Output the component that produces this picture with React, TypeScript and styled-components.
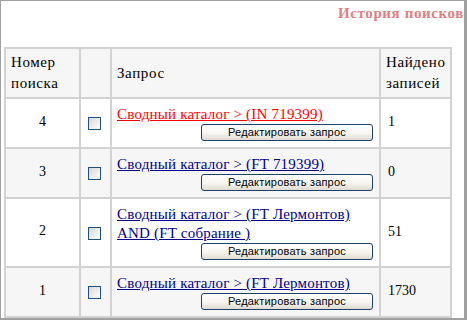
import styled, { createGlobalStyle } from "styled-components";

const GlobalStyle = createGlobalStyle`
  html, body {
    margin: 0;
    padding: 0;
    background: #ffffff;
  }
`;

type Row = {
  num: number;
  query: string[];
  found: number;
  active?: boolean;
  shaded?: boolean;
};

const rows: Row[] = [
  { num: 4, query: ["Сводный каталог > (IN 719399)"], found: 1, active: true },
  { num: 3, query: ["Сводный каталог > (FT 719399)"], found: 0, shaded: true },
  {
    num: 2,
    query: ["Сводный каталог > (FT Лермонтов)", "AND (FT собрание )"],
    found: 51,
  },
  { num: 1, query: ["Сводный каталог > (FT Лермонтов)"], found: 1730, shaded: true },
];

export default function App() {
  return (
    <>
      <GlobalStyle />
      <Frame>
        <Title>История поисков</Title>
        <HistoryTable>
          <colgroup>
            <col style={{ width: 75 }} />
            <col style={{ width: 31 }} />
            <col style={{ width: 269 }} />
            <col style={{ width: 71 }} />
          </colgroup>
          <thead>
            <tr>
              <HeadCell>
                Номер
                <br />
                поиска
              </HeadCell>
              <HeadCell />
              <HeadCell>Запрос</HeadCell>
              <HeadCell>
                Найдено
                <br />
                записей
              </HeadCell>
            </tr>
          </thead>
          <tbody>
            {rows.map((row) => (
              <tr key={row.num}>
                <NumCell $shaded={row.shaded}>{row.num}</NumCell>
                <CheckCell $shaded={row.shaded}>
                  <Check />
                </CheckCell>
                <QueryCell $shaded={row.shaded}>
                  <QueryLink href="#" $active={row.active}>
                    {row.query.map((line, i) => (
                      <span key={i}>
                        {i > 0 && <br />}
                        {line}
                      </span>
                    ))}
                  </QueryLink>
                  <ButtonRow>
                    <EditButton type="button">Редактировать запрос</EditButton>
                  </ButtonRow>
                </QueryCell>
                <FoundCell $shaded={row.shaded}>{row.found}</FoundCell>
              </tr>
            ))}
          </tbody>
        </HistoryTable>
      </Frame>
    </>
  );
}

const Frame = styled.div`
  & {
    box-sizing: border-box;
    width: 467px;
    height: 320px;

    border-style: solid;
    border-color: #a0a0a0;
    border-width: 1px 3px 2px 1px;

    font-family: "Liberation Serif", "Times New Roman", serif;
    color: #000000;
  }
`;

const Title = styled.div`
  & {
    padding: 3px 0px 0px 0px;
    height: 18px;
    line-height: 18px;

    text-align: right;
    font-size: 15px;
    font-weight: bold;
    letter-spacing: 0.6px;
    color: #e08081;
  }
`;

const HistoryTable = styled.table`
  & {
    margin: 25px 0px 0px 3px;
    width: 446px;
    table-layout: fixed;

    border: 1px solid #d2d2d2;
    border-collapse: separate;
    border-spacing: 0px;
  }
`;

const HeadCell = styled.th`
  & {
    padding: 3px 4px 3px 5px;
    border: 1px solid #d2d2d2;
    background: #f6f6f6;

    text-align: left;
    vertical-align: middle;
    font-weight: normal;
    font-size: 15px;
    line-height: 21px;
    letter-spacing: 0.6px;
    white-space: nowrap;
  }
`;

const BodyCell = styled.td<{ $shaded?: boolean }>`
  & {
    padding: 6px 5px;
    border: 1px solid #d2d2d2;
    background: ${(p) => (p.$shaded ? "#f6f6f6" : "#ffffff")};

    vertical-align: middle;
    font-size: 14px;
  }
`;

const NumCell = styled(BodyCell)`
  && {
    padding-bottom: 9px;
    text-align: center;
  }
`;

const CheckCell = styled(BodyCell)`
  && {
    padding: 0px;
    text-align: center;
  }
`;

const QueryCell = styled(BodyCell)`
  && {
    padding: 6px 5px 6px 5px;
  }
`;

const FoundCell = styled(BodyCell)`
  && {
    padding-left: 7px;
    padding-bottom: 8px;
  }
`;

const Check = styled.span`
  & {
    display: inline-block;
    box-sizing: border-box;
    width: 13px;
    height: 13px;
    margin: 0px 0px 0px -2px;
    vertical-align: middle;

    border: 1px solid #1c5180;
    background: linear-gradient(135deg, #d8d8d2 0%, #f4f4f2 70%, #ffffff 100%);
  }
`;

const QueryLink = styled.a<{ $active?: boolean }>`
  & {
    display: block;
    font-size: 15px;
    line-height: 19px;
    letter-spacing: 0.2px;
    color: ${(p) => (p.$active ? "#ff0000" : "#00008b")};
    text-decoration: underline;
    white-space: nowrap;
  }
`;

const ButtonRow = styled.div`
  & {
    display: flex;
    justify-content: flex-end;
  }
`;

const EditButton = styled.button`
  & {
    box-sizing: border-box;
    width: 172px;
    height: 17px;
    padding: 0px;
    margin: 0px 1px 0px 0px;

    border: 1px solid #1f3f6e;
    border-radius: 3px;
    background: linear-gradient(180deg, #ffffff 0%, #f6f5f0 55%, #dedbd0 100%);

    font-family: "Liberation Sans", Arial, sans-serif;
    font-size: 11px;
    line-height: 15px;
    letter-spacing: 0.2px;
    color: #000000;
  }
`;
